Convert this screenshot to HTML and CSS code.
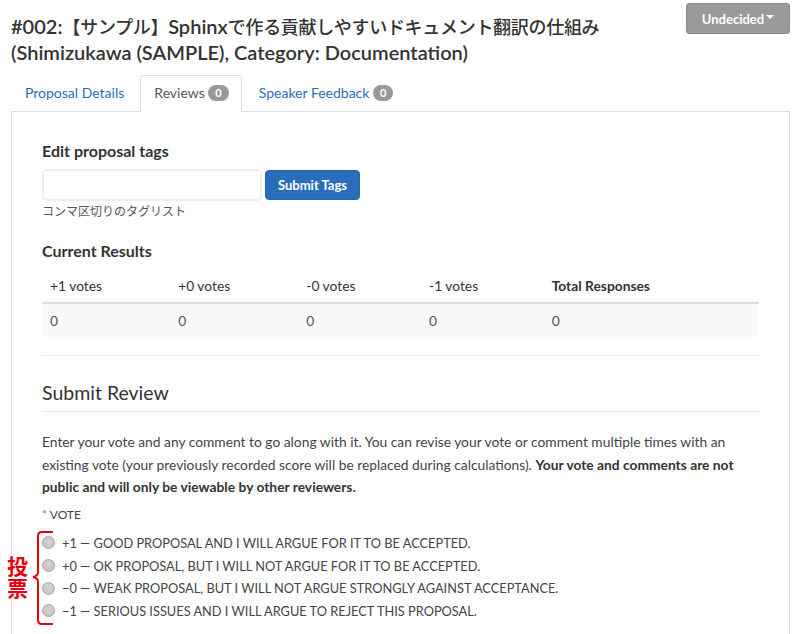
FILE: index.html
```html
<!DOCTYPE html>
<html>
<head>
<meta charset="utf-8">
<link rel="stylesheet" href="styles.css">
</head>
<body>
<div class="page">
  <div class="header">
    <h1 class="title">#002:<span class="ja">【サンプル】</span>Sphinx<span class="ja">で作る貢献しやすいドキュメント翻訳の仕組み</span><br>(Shimizukawa (SAMPLE), Category: Documentation)</h1>
    <button class="status-btn">Undecided<span class="caret"></span></button>
  </div>
  <ul class="tabs">
    <li class="tab"><a>Proposal Details</a></li>
    <li class="tab active"><a>Reviews <span class="badge">0</span></a></li>
    <li class="tab"><a>Speaker Feedback <span class="badge">0</span></a></li>
  </ul>
  <div class="panel">
    <h4 class="sub">Edit proposal tags</h4>
    <div class="tag-form">
      <input class="tag-input" type="text">
      <button class="btn-primary">Submit Tags</button>
    </div>
    <div class="help">コンマ区切りのタグリスト</div>

    <h4 class="sub results-title">Current Results</h4>
    <table class="results">
      <thead>
        <tr><th>+1 votes</th><th>+0 votes</th><th>-0 votes</th><th>-1 votes</th><th>Total Responses</th></tr>
      </thead>
      <tbody>
        <tr><td>0</td><td>0</td><td>0</td><td>0</td><td>0</td></tr>
      </tbody>
    </table>
    <hr class="sep">
    <h3 class="legend">Submit Review</h3>
    <p class="intro">Enter your vote and any comment to go along with it. You can revise your vote or comment multiple times with an existing vote (your previously recorded score will be replaced during calculations). <strong>Your vote and comments are not public and will only be viewable by other reviewers.</strong></p>
    <div class="vote-label"><span class="req">*</span> VOTE</div>
    <div class="votes">
      <label class="vote"><span class="radio"></span>+1 — GOOD PROPOSAL AND I WILL ARGUE FOR IT TO BE ACCEPTED.</label>
      <label class="vote"><span class="radio"></span>+0 — OK PROPOSAL, BUT I WILL NOT ARGUE FOR IT TO BE ACCEPTED.</label>
      <label class="vote"><span class="radio"></span>−0 — WEAK PROPOSAL, BUT I WILL NOT ARGUE STRONGLY AGAINST ACCEPTANCE.</label>
      <label class="vote"><span class="radio"></span>−1 — SERIOUS ISSUES AND I WILL ARGUE TO REJECT THIS PROPOSAL.</label>
      <svg class="brace" width="22" height="95" viewBox="0 0 22 95">
        <path d="M21 1 H10 Q6 1 6 5 V41 Q6 45 1 46 Q6 47 6 51 V89 Q6 93 10 93 H21" fill="none" stroke="#e4000f" stroke-width="2"/>
      </svg>
      <div class="annot-text">投<br>票</div>
    </div>
  </div>
</div>
</body>
</html>
```
FILE: styles.css
```css
html, body { margin: 0; padding: 0; background: #fff; }
body {
  font-family: Lato, "Noto Sans CJK JP", sans-serif;
  color: #333;
  font-size: 13px;
}
.page { padding: 0 11px 0 11px; width: 779px; }
.header { display: flex; justify-content: space-between; align-items: flex-start; }
.title {
  margin: 13px 0 0 0;
  font-size: 20px;
  line-height: 26px;
  height: 52px;
  font-weight: 600;
  color: #333;
  white-space: nowrap;
}
.ja {
  font-size: 18px;
  line-height: 1;
  letter-spacing: -0.3px;
  font-weight: 500;
}
.status-btn {
  margin-top: 3px;
  height: 31px;
  width: 104px;
  background: #9a9a9a;
  border: 1px solid #8c8c8c;
  border-radius: 3px;
  color: #fff;
  font-family: Lato, sans-serif;
  font-weight: 700;
  font-size: 13px;
  padding: 0;
  display: flex; align-items: center; justify-content: center;
}
.caret {
  display: inline-block;
  width: 0; height: 0;
  border-left: 4px solid transparent;
  border-right: 4px solid transparent;
  border-top: 4px solid #fff;
  margin-left: 2px;
  margin-top: -3px;
}
.tabs {
  list-style: none;
  margin: 10px 0 0 0;
  padding: 0;
  display: flex;
  height: 36px;
}
.tab a {
  display: block;
  height: 36px;
  box-sizing: border-box;
  padding: 0 12px 0 13px;
  line-height: 34px;
  font-size: 14px;
  color: #2a6ebb;
  border: 1px solid transparent;
  border-bottom: 0;
  border-radius: 4px 4px 0 0;
  margin-right: 3px;
}
.tab.active a {
  color: #555;
  border-color: #ddd;
  background: #fff;
  height: 37px;
  position: relative;
  z-index: 1;
}
.badge {
  display: inline-block;
  background: #999;
  color: #fff;
  font-size: 11px;
  font-weight: 700;
  line-height: 16px;
  padding: 0 7px;
  border-radius: 9px;
  vertical-align: 1px;
}
.panel {
  border: 1px solid #ddd;
  border-bottom: 0;
  padding: 30px 30px 0 30px;
  height: 523px;
  box-sizing: border-box;
}
.sub {
  margin: 0;
  font-size: 16px;
  font-weight: 700;
  line-height: 18px;
  color: #333;
}
.tag-form { display: flex; align-items: center; margin-top: 9px; gap: 3px; }
.tag-input {
  width: 220px;
  height: 32px;
  box-sizing: border-box;
  border: 2px solid #eee;
  border-radius: 5px;
  margin: 0;
}
.btn-primary {
  height: 30px;
  padding: 0 12px;
  background: #2a6ebb;
  color: #fff;
  border: 1px solid #2766ad;
  border-radius: 4px;
  font-family: Lato, sans-serif;
  font-weight: 700;
  font-size: 13px;
}
.help { font-size: 12px; color: #555; margin-top: 3px; line-height: 16px; }
.results-title { margin-top: 22px; }
.results {
  width: 100%;
  border-collapse: collapse;
  margin-top: 9px;
  font-size: 13.8px;
}
.results th {
  text-align: left;
  font-weight: 400;
  padding: 8px 8px 7px 8px;
  line-height: 18px;
  border-bottom: 2px solid #ddd;
  color: #333;
}
.results th:last-child { font-weight: 700; }
.results td {
  padding: 8px 8px;
  line-height: 17px;
  background: #f9f9f9;
  color: #555;
}
.sep { border: 0; border-top: 1px solid #eee; margin: 18px 0 0 0; }
.legend {
  margin: 24px 0 0 0;
  font-size: 19.5px;
  font-weight: 400;
  line-height: 26px;
  padding-bottom: 5px;
  border-bottom: 1px solid #e5e5e5;
  color: #333;
}
.intro { margin: 19px 0 0 0; line-height: 22.5px; color: #444; font-size: 13.8px; max-width: 716px; }
.intro strong { color: #333; }
.vote-label { margin-top: 8px; font-size: 12px; color: #444; line-height: 16px; }
.req { color: #d9534f; }
.votes { position: relative; margin-top: 9px; }
.vote {
  display: flex;
  align-items: center;
  height: 22.7px;
  font-size: 12.8px;
  color: #444;
}
.radio {
  display: inline-block;
  width: 11px; height: 11px;
  border-radius: 50%;
  background: radial-gradient(circle at 50% 40%, #d8d2d5, #c4bcc0);
  border: 1px solid #a8a4a6;
  margin: 0 7px 0 0;
}
.brace { position: absolute; left: -10px; top: -1px; }
.annot-text {
  position: absolute;
  left: -35px;
  top: 22px;
  color: #e4000f;
  font-weight: 700;
  font-size: 21px;
  line-height: 22.5px;
  font-family: "Noto Sans CJK JP", sans-serif;
  text-shadow: -1px -1px 0 #fff, 1px -1px 0 #fff, -1px 1px 0 #fff, 1px 1px 0 #fff, 0 2px 0 #fff, 2px 0 0 #fff, -2px 0 0 #fff, 0 -2px 0 #fff;
}
```
